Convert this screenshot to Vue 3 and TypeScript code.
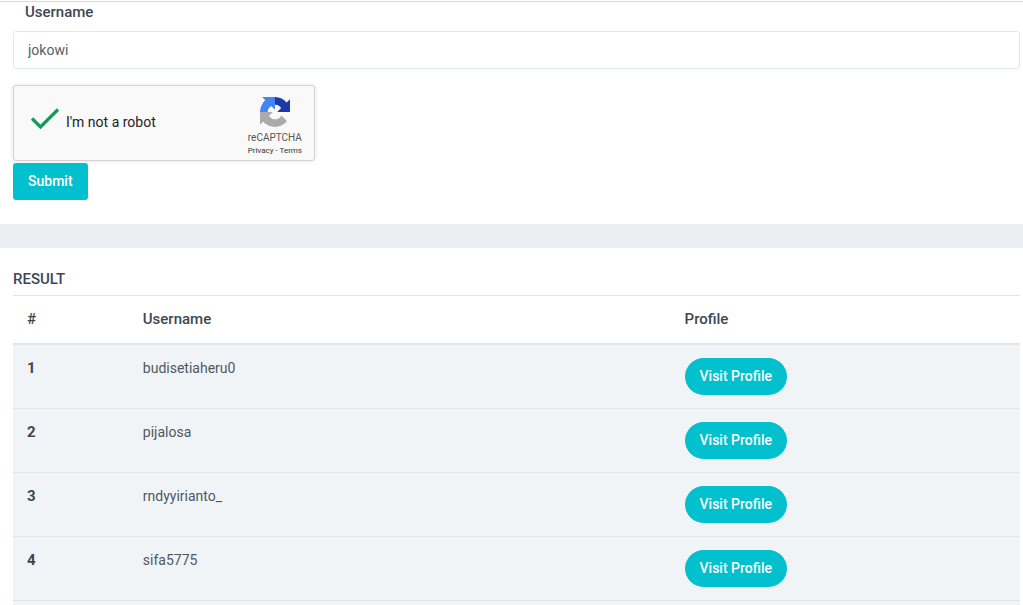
<script setup lang="ts">
import { ref } from 'vue'

interface Account {
  id: number
  username: string
}

const username = ref('jokowi')
const verified = ref(true)

const accounts: Account[] = [
  { id: 1, username: 'budisetiaheru0' },
  { id: 2, username: 'pijalosa' },
  { id: 3, username: 'rndyyirianto_' },
  { id: 4, username: 'sifa5775' },
]
</script>

<template>
  <main class="page">
    <section class="panel search">
      <form class="form" @submit.prevent>
        <label class="field-label" for="username">Username</label>
        <input id="username" v-model="username" class="field" type="text" />

        <div class="captcha">
          <label class="check">
            <span class="tick">
              <input v-model="verified" type="checkbox" />
              <svg v-if="verified" viewBox="0 0 30 24" aria-hidden="true">
                <path d="M2 11.500 L10.500 20 L28 2.500" fill="none" stroke="#0f9d58" stroke-width="3.2" />
              </svg>
            </span>
            <span>I'm not a robot</span>
          </label>
          <div class="brand">
            <svg class="logo" viewBox="0 0 64 64" aria-hidden="true">
              <path fill="#1c3aa9" d="M64 31.955l-.033-1.37V4.687l-7.16 7.16C50.948 4.674 42.033.093 32.05.093c-10.4 0-19.622 4.96-25.458 12.64l11.736 11.86a15.55 15.55 0 0 1 4.754-5.334c2.05-1.6 4.952-2.906 8.968-2.906.485 0 .86.057 1.135.163 4.976.393 9.288 3.14 11.828 7.124l-8.307 8.307L64 31.953" />
              <path fill="#4285f4" d="M31.862.094l-1.37.033H4.594l7.16 7.16C4.58 13.147 0 22.06 0 32.046c0 10.4 4.96 19.622 12.64 25.458L24.5 45.768a15.55 15.55 0 0 1-5.334-4.754c-1.6-2.05-2.906-4.952-2.906-8.968 0-.485.057-.86.163-1.135.393-4.976 3.14-9.288 7.124-11.828l8.307 8.307L31.86.095" />
              <path fill="#ababab" d="M.001 32.045l.033 1.37v25.898l7.16-7.16c5.86 7.173 14.774 11.754 24.76 11.754 10.4 0 19.622-4.96 25.458-12.64l-11.736-11.86a15.55 15.55 0 0 1-4.754 5.334c-2.05 1.6-4.952 2.906-8.968 2.906-.485 0-.86-.057-1.135-.163-4.976-.393-9.288-3.14-11.828-7.124l8.307-8.307c-10.522.04-22.4.066-27.295-.005" />
            </svg>
            <span class="brand-name">reCAPTCHA</span>
            <span class="legal"><a href="#privacy">Privacy</a> - <a href="#terms">Terms</a></span>
          </div>
        </div>

        <button class="button" type="submit">Submit</button>
      </form>
    </section>

    <section class="panel result">
      <h2 class="title">RESULT</h2>
      <table class="table">
        <colgroup>
          <col class="col-id" />
          <col class="col-name" />
          <col />
        </colgroup>
        <thead>
          <tr>
            <th scope="col">#</th>
            <th scope="col">Username</th>
            <th scope="col">Profile</th>
          </tr>
        </thead>
        <tbody>
          <tr v-for="account in accounts" :key="account.id">
            <th scope="row">{{ account.id }}</th>
            <td>{{ account.username }}</td>
            <td><a class="button pill" href="#profile">Visit Profile</a></td>
          </tr>
        </tbody>
        <tfoot>
          <tr>
            <td colspan="3"></td>
          </tr>
        </tfoot>
      </table>
    </section>
  </main>
</template>

<style>
body {
  margin: 0;
  background: #ebeff2;
}
</style>

<style scoped>
* {
  box-sizing: border-box;
}

.page {
  display: flex;
  flex-direction: column;
  gap: 24px;
  padding-top: 1px;
  background: linear-gradient(#fff 1px, #ebeff2 1px);
  color: #50575f;
  font: 14px/20px Roboto, "Open Sans", sans-serif;
}

.panel {
  padding: 0 3px 0 13px;
  background: #fff;
}

.search {
  padding-bottom: 24px;
  border-top: 1px solid #d6dadc;
}

.form {
  display: flex;
  flex-direction: column;
  align-items: flex-start;
}

.field-label {
  padding-left: 12px;
  margin-bottom: 9px;
  color: #3e4751;
  font-size: 15px;
  font-weight: 500;
}

.field {
  width: 100%;
  height: 38px;
  padding: 0 14px;
  border: 1px solid #e3e8ec;
  border-radius: 3px;
  background: #fff;
  color: #565e66;
  font: inherit;
  outline: none;
}

.captcha {
  display: flex;
  justify-content: space-between;
  width: 302px;
  height: 76px;
  margin: 16px 0 2px;
  padding: 0 12px 0 16px;
  border: 1px solid #d3d3d3;
  border-radius: 3px;
  background: #f9f9f9;
  box-shadow: 0 0 4px 1px rgba(0, 0, 0, 0.08);
}

.check {
  display: flex;
  align-items: center;
  gap: 6px;
  padding-bottom: 2px;
  color: #222;
}

.tick {
  display: grid;
  width: 30px;
  height: 30px;
}

.tick input,
.tick svg {
  grid-area: 1 / 1;
  width: 30px;
  margin: 0;
}

.tick input {
  height: 30px;
  appearance: none;
}

.tick svg {
  height: 24px;
  pointer-events: none;
}

.brand {
  display: flex;
  flex-direction: column;
  align-items: center;
  padding-top: 11px;
  color: #555;
}

.logo {
  width: 30px;
  height: 30px;
  margin-bottom: 4px;
}

.brand-name {
  font-size: 10px;
  line-height: 14px;
}

.legal {
  color: #333;
  font-size: 8px;
  line-height: 12px;
}

.legal a {
  color: inherit;
  text-decoration: none;
}

.button {
  display: inline-block;
  padding: 8px 15px 9px;
  border: 0;
  border-radius: 3px;
  background: #02c0ce;
  color: #fff;
  font: 500 14px/20px Roboto, "Open Sans", sans-serif;
  text-decoration: none;
  vertical-align: top;
  cursor: pointer;
}

.pill {
  border-radius: 20px;
}

.result {
  padding-top: 21px;
}

.title {
  margin: 0 0 6px;
  color: #3e4751;
  font-size: 15px;
  font-weight: 500;
  line-height: 20px;
}

.table {
  width: 100%;
  border-spacing: 0;
  table-layout: fixed;
}

.col-id {
  width: 11.5%;
}

.col-name {
  width: 53.8%;
}

th,
td {
  padding: 13px 14px;
  border-top: 1px solid #dfe5e9;
  text-align: left;
  vertical-align: top;
}

th {
  color: #3e4751;
  font-size: 15px;
  font-weight: 500;
}

tbody th {
  font-weight: 700;
}

thead th {
  padding-bottom: 14px;
  border-bottom: 1px solid #dfe5e9;
}

tbody,
tfoot {
  background: #f0f4f7;
}

tfoot td {
  padding: 2px;
}
</style>
